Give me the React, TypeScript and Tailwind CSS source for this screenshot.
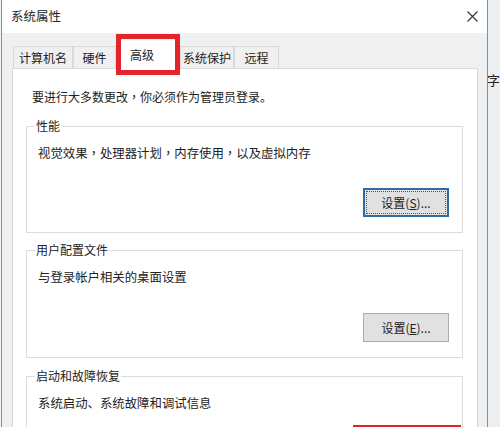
const tabs = [
  { label: '计算机名', w: 'w-[60px]' },
  { label: '硬件', w: 'w-[43px]' },
  { label: '高级', w: 'w-[64px]', active: true },
  { label: '系统保护', w: 'w-[54px]' },
  { label: '远程', w: 'w-[45px]' },
];

// full-width commas sit centred in the cell, like the Windows UI font
function CjkText({ text }: { text: string }) {
  const parts = text.split('，');
  return (
    <>
      {parts.map((p, i) => (
        <span key={i}>
          {p}
          {i < parts.length - 1 && <span className="font-['Noto_Sans_CJK_TC',sans-serif]">，</span>}
        </span>
      ))}
    </>
  );
}

function SettingsButton({ label, hotkey, focused }: { label: string; hotkey: string; focused?: boolean }) {
  if (focused) {
    return (
      <div className="mt-auto mr-[13px] mb-[15px] flex h-[29px] w-[86px] items-center justify-center self-end border-2 border-[#2f6aa3] bg-[#e1e1e1] p-[1px]">
        <span className="flex h-full w-full items-center justify-center border border-dotted border-[#555]">
          {label}(<span className="underline">{hotkey}</span>)...
        </span>
      </div>
    );
  }
  return (
    <div className="mt-auto mr-[13px] mb-[15px] flex h-[29px] w-[86px] items-center justify-center self-end border border-[#adadad] bg-[#e1e1e1]">
      {label}(<span className="underline">{hotkey}</span>)...
    </div>
  );
}

function GroupBox({ title, desc, children, className }: { title: string; desc: string; children?: React.ReactNode; className?: string }) {
  return (
    <div className={`ml-[13px] flex w-[437px] flex-col border border-[#dcdcdc] ${className ?? ''}`}>
      <span className="-mt-[9px] ml-[8px] h-[16px] self-start bg-white px-[1px] leading-[16px]">{title}</span>
      <p className="mt-[11px] ml-[11px] text-[12.4px] leading-[16px]">
        <CjkText text={desc} />
      </p>
      {children}
    </div>
  );
}

export default function App() {
  return (
    <div className="flex h-[427px] w-[500px] overflow-hidden bg-[#f4f4f4] font-['Noto_Sans_CJK_SC',sans-serif] text-[12px] text-[#222]">
      <div className="ml-[1px] flex w-[493px] flex-col border-x border-[#6d94bf] bg-[#f0f0f0]">
        {/* title bar */}
        <div className="flex h-[33px] shrink-0 items-center justify-between bg-white pl-[9px] pr-[9px]">
          <span className="text-[12.5px]">系统属性</span>
          <svg width="11" height="11" viewBox="0 0 11 11">
            <path d="M0.5 0.5 L10.5 10.5 M10.5 0.5 L0.5 10.5" stroke="#333" strokeWidth="1.1" />
          </svg>
        </div>

        <div className="flex flex-1 flex-col pl-[10px] pr-[9px] pt-[13px]">
          {/* tabs */}
          <div className="flex h-[22px] items-end pl-[1px]">
            {tabs.map((t) =>
              t.active ? (
                <div key={t.label} className={`relative -mb-[1px] flex h-[29px] ${t.w} items-start justify-center bg-white pt-[6px]`}>
                  <span className="ml-[-12px]">{t.label}</span>
                  <span className="absolute -top-[6px] -bottom-[6px] left-0 right-0 border-[5px] border-[#e3242b]" />
                </div>
              ) : (
                <div key={t.label} className={`flex h-[22px] ${t.w} items-center justify-center border border-b-0 border-[#d9d9d9] bg-[#f0f0f0] leading-none`}>
                  {t.label}
                </div>
              )
            )}
          </div>

          {/* tab panel */}
          <div className="flex flex-1 flex-col border border-[#d9d9d9] bg-white pt-[20px]">
            <p className="ml-[19px] h-[16px] leading-[16px]">
              <CjkText text="要进行大多数更改，你必须作为管理员登录。" />
            </p>

            <GroupBox title="性能" desc="视觉效果，处理器计划，内存使用，以及虚拟内存" className="mt-[21px] h-[107px]">
              <SettingsButton label="设置" hotkey="S" focused />
            </GroupBox>

            <GroupBox title="用户配置文件" desc="与登录帐户相关的桌面设置" className="mt-[17px] h-[108px]">
              <SettingsButton label="设置" hotkey="E" />
            </GroupBox>

            <GroupBox title="启动和故障恢复" desc="系统启动、系统故障和调试信息" className="mt-[18px] h-[80px]">
              <div className="mt-[14px] mr-[1px] h-[30px] w-[108px] shrink-0 self-end border-[4px] border-[#e3242b]" />
            </GroupBox>
          </div>
        </div>
      </div>

      {/* background window peeking out on the right */}
      <div className="flex flex-1 flex-col bg-[#eceff2]">
        <div className="h-[72px]" />
        <span className="-ml-[1px] text-[13px] leading-[16px] text-[#222]">字</span>
      </div>
    </div>
  );
}
